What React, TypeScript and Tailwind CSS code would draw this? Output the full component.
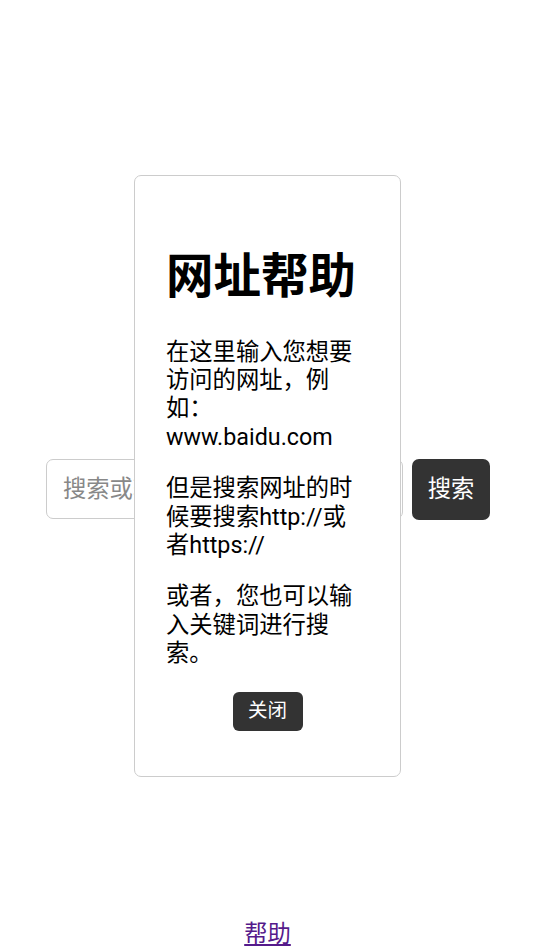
import { useState } from 'react';

const font = { fontFamily: 'Roboto, "Noto Sans CJK SC", sans-serif' };

export default function App() {
  const [open, setOpen] = useState(true);
  const [query, setQuery] = useState('');

  return (
    <div className="flex h-[951px] flex-col bg-white text-black" style={font}>
      {/* Search form */}
      <form
        className="mt-[459px] flex items-stretch gap-[9px] pl-[46px]"
        onSubmit={(e) => e.preventDefault()}
      >
        <input
          value={query}
          onChange={(e) => setQuery(e.target.value)}
          placeholder="搜索或输入网址"
          className="h-[60px] w-[357px] rounded-[7px] border border-[#cccccc] px-4 text-[23.3px] text-black placeholder:text-[#888888] focus:outline-none"
        />
        <button
          type="submit"
          className="h-[61px] w-[78px] rounded-[7px] bg-[#333333] text-[23.3px] text-white"
        >
          搜索
        </button>
      </form>

      {/* Help link */}
      <div className="mt-auto mb-[2px] text-center">
        <a
          href="#"
          onClick={(e) => { e.preventDefault(); setOpen(true); }}
          className="text-[23.3px] leading-[28px] text-[#551a8b] underline"
        >
          帮助
        </a>
      </div>

      {/* Help modal */}
      {open && (
        <div className="fixed inset-0 flex items-center justify-center">
          <div className="flex h-[602px] w-[267px] flex-col rounded-[7px] border border-[#cccccc] bg-white px-[31px] pt-[73px]">
            <h1 className="text-[47.5px] font-bold leading-[56px]">网址帮助</h1>
            <div className="mt-[33px] flex flex-col gap-[23px] text-[23.3px] leading-[28.4px]">
              <p>在这里输入您想要访问的网址，例如：www.baidu.com</p>
              <p>但是搜索网址的时候要搜索http://或者https://</p>
              <p>或者，您也可以输入关键词进行搜索。</p>
            </div>
            <div className="mt-[24px] flex justify-center">
              <button
                onClick={() => setOpen(false)}
                className="h-[39px] w-[70px] rounded-[6px] bg-[#333333] text-[19.5px] text-white"
              >
                关闭
              </button>
            </div>
          </div>
        </div>
      )}
    </div>
  );
}
